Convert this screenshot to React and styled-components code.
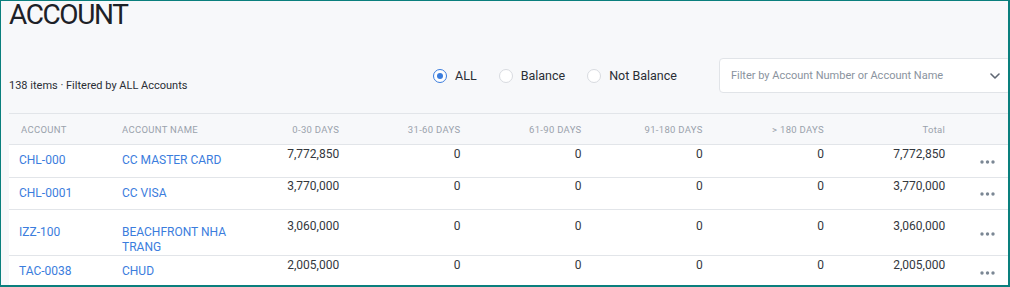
import React, { useState } from "react";
import styled, { createGlobalStyle, css } from "styled-components";

const GlobalStyle = createGlobalStyle`
  body {
    margin: 0;
    font-family: Roboto, "Liberation Sans", sans-serif;
  }
`;

const Frame = styled.div`
  width: 1010px;
  height: 287px;
  box-sizing: border-box;
  border: 1px solid #0a7f7d;
  border-right-width: 2px;
  border-bottom-width: 2px;
  background: #f7f8fa;
  overflow: hidden;
`;

const Page = styled.div`
  width: 1010px;
  padding-left: 8px;
  box-sizing: border-box;
`;

const Title = styled.h1`
  margin: -3px 0 0;
  font-size: 28px;
  font-weight: 400;
  line-height: 33px;
  color: #1d2127;
  letter-spacing: -1.4px;
`;

const Toolbar = styled.div`
  display: flex;
  align-items: center;
  height: 35px;
  margin-top: 27px;
  margin-bottom: 20px;
`;

const Summary = styled.div`
  flex: 0 0 424px;
  align-self: flex-end;
  font-size: 11px;
  line-height: 15px;
  color: #2a2e35;
  white-space: nowrap;
`;

const RadioGroup = styled.div`
  display: flex;
  align-items: center;
  gap: 22px;
`;

const RadioLabel = styled.label`
  display: flex;
  align-items: center;
  gap: 8px;
  font-size: 12.5px;
  color: #2a2e35;
  white-space: nowrap;
  cursor: pointer;
`;

const RadioCircle = styled.span`
  width: 14px;
  height: 14px;
  box-sizing: border-box;
  border-radius: 50%;
  background: #fff;
  border: 1px solid #d8dbe0;
  display: flex;
  align-items: center;
  justify-content: center;

  ${(p) =>
    p.checked &&
    css`
      border-color: #3b7ddd;
      &::after {
        content: "";
        width: 6px;
        height: 6px;
        border-radius: 50%;
        background: #3b7ddd;
      }
    `}
`;

const FilterBox = styled.div`
  margin-left: 42px;
  width: 300px;
  height: 35px;
  box-sizing: border-box;
  display: flex;
  align-items: center;
  justify-content: space-between;
  padding: 0 10px 0 11px;
  background: #fff;
  border: 1px solid #e1e4e8;
  border-radius: 4px;
`;

const FilterInput = styled.input`
  flex: 1;
  border: none;
  outline: none;
  background: transparent;
  padding: 0;
  font-family: inherit;
  font-size: 11px;
  color: #2a2e35;

  &::placeholder {
    color: #8a939e;
  }
`;

const columns = "101px 120px repeat(6, 121.2px) 62px";

const HeaderRow = styled.div`
  display: grid;
  grid-template-columns: ${columns};
  box-sizing: border-box;
  height: 32px;
  align-items: center;
  border-top: 1px solid #e2e5e9;
  border-bottom: 1px solid #e2e5e9;
`;

const HeaderCell = styled.div`
  padding: 0 12px;
  font-size: 9.5px;
  color: #9aa2ac;
  letter-spacing: 0.3px;
  white-space: nowrap;
  text-transform: ${(p) => (p.plain ? "none" : "uppercase")};
  text-align: ${(p) => (p.right ? "right" : "left")};
`;

const Body = styled.div`
  background: #fff;
`;

const Row = styled.div`
  display: grid;
  grid-template-columns: ${columns};
  box-sizing: border-box;
  min-height: 32.5px;
  border-bottom: 1px solid #e2e5e9;
  font-size: 12px;
  line-height: 15px;
`;

const LinkCell = styled.a`
  align-self: center;
  padding: 0 12px 0 ${(p) => (p.first ? "10px" : "12px")};
  padding-top: ${(p) => (p.lines - 1) * 15}px;
  color: #3b7ddd;
  text-decoration: none;
  white-space: nowrap;
  cursor: pointer;
`;

const NumCell = styled.div`
  display: flex;
  align-items: center;
  justify-content: flex-end;
  padding: 0 12px 13px;
  color: #33373d;
`;

const MenuCell = styled.button`
  align-self: center;
  justify-self: start;
  margin-left: 23px;
  padding: 2px 0 0;
  border: none;
  background: none;
  display: flex;
  cursor: pointer;
`;

const Dots = () => (
  <svg width="15" height="4" viewBox="0 0 15 4">
    <circle cx="2" cy="2" r="1.7" fill="#7b8794" />
    <circle cx="7.5" cy="2" r="1.7" fill="#7b8794" />
    <circle cx="13" cy="2" r="1.7" fill="#7b8794" />
  </svg>
);

const Chevron = () => (
  <svg width="10" height="6" viewBox="0 0 10 6">
    <path
      d="M1 1l4 4 4-4"
      fill="none"
      stroke="#5f6773"
      strokeWidth="1.6"
      strokeLinecap="round"
      strokeLinejoin="round"
    />
  </svg>
);

const accounts = [
  { code: "CHL-000", name: ["CC MASTER CARD"], d30: "7,772,850", total: "7,772,850" },
  { code: "CHL-0001", name: ["CC VISA"], d30: "3,770,000", total: "3,770,000" },
  { code: "IZZ-100", name: ["BEACHFRONT NHA", "TRANG"], d30: "3,060,000", total: "3,060,000" },
  { code: "TAC-0038", name: ["CHUD"], d30: "2,005,000", total: "2,005,000" },
];

const filters = ["ALL", "Balance", "Not Balance"];

const App = () => {
  const [filter, setFilter] = useState("ALL");
  const [search, setSearch] = useState("");

  return (
    <>
      <GlobalStyle />
      <Frame>
        <Page>
          <Title>ACCOUNT</Title>
          <Toolbar>
            <Summary>138 items · Filtered by ALL Accounts</Summary>
            <RadioGroup>
              {filters.map((f) => (
                <RadioLabel key={f} onClick={() => setFilter(f)}>
                  <RadioCircle checked={filter === f} />
                  {f}
                </RadioLabel>
              ))}
            </RadioGroup>
            <FilterBox>
              <FilterInput
                type="text"
                placeholder="Filter by Account Number or Account Name"
                value={search}
                onChange={(e) => setSearch(e.target.value)}
              />
              <Chevron />
            </FilterBox>
          </Toolbar>
          <HeaderRow>
            <HeaderCell>Account</HeaderCell>
            <HeaderCell>Account Name</HeaderCell>
            <HeaderCell right>0-30 Days</HeaderCell>
            <HeaderCell right>31-60 Days</HeaderCell>
            <HeaderCell right>61-90 Days</HeaderCell>
            <HeaderCell right>91-180 Days</HeaderCell>
            <HeaderCell right>&gt; 180 Days</HeaderCell>
            <HeaderCell right plain>
              Total
            </HeaderCell>
            <HeaderCell />
          </HeaderRow>
          <Body>
            {accounts.map((acc) => (
              <Row key={acc.code}>
                <LinkCell first lines={1}>
                  {acc.code}
                </LinkCell>
                <LinkCell lines={acc.name.length}>
                  {acc.name.map((line, i) => (
                    <div key={i}>{line}</div>
                  ))}
                </LinkCell>
                <NumCell>{acc.d30}</NumCell>
                <NumCell>0</NumCell>
                <NumCell>0</NumCell>
                <NumCell>0</NumCell>
                <NumCell>0</NumCell>
                <NumCell>{acc.total}</NumCell>
                <MenuCell>
                  <Dots />
                </MenuCell>
              </Row>
            ))}
          </Body>
        </Page>
      </Frame>
    </>
  );
};

export default App;
